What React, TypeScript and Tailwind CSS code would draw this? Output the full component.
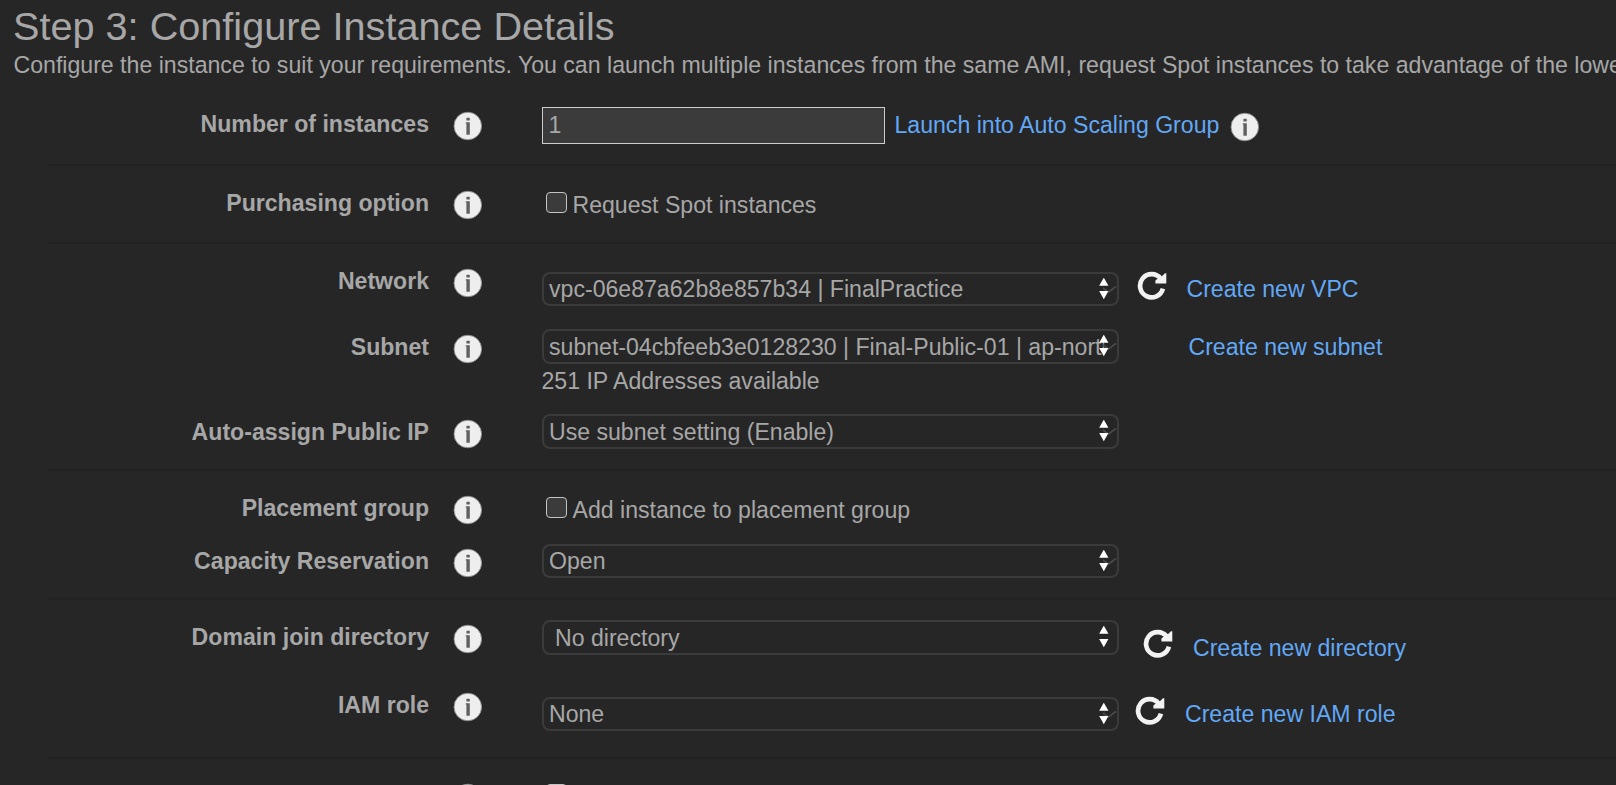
import React from 'react';

function Info({ className = '' }: { className?: string }) {
  return (
    <svg className={`size-[30px] shrink-0 ${className}`} viewBox="0 0 30 30">
      <circle cx="14.8" cy="15" r="13.8" fill="#eeeeee" stroke="#8a8a8a" strokeWidth="0.9" />
      <rect x="13.4" y="6.8" width="3.4" height="2.7" rx="0.6" fill="#606060" />
      <path d="M12.8 11.2H16.8V23.8H13.4V12.6H12.8Z" fill="#606060" />
    </svg>
  );
}

function Refresh({ className = '' }: { className?: string }) {
  return (
    <svg className={`size-[30px] shrink-0 ${className}`} viewBox="0 0 30 30">
      <path d="M23.8 7.6A11.6 11.6 0 1 0 25.9 17.6" fill="none" stroke="#f2f2f2" strokeWidth="4.7" />
      <path d="M29.3 2.2V12.6H18.4V9.6L21.4 7L24.6 5.4L28 2.2Z" fill="#f2f2f2" />
    </svg>
  );
}

function Select({ value, className = '', check = true, indent = false }: { value: string; className?: string; check?: boolean; indent?: boolean }) {
  return (
    <div className={`relative flex w-[577px] shrink-0 items-center overflow-hidden rounded-[8px] border-2 border-[#3b3b3b] ${className}`}>
      <span className={`w-[560px] overflow-hidden whitespace-nowrap leading-[26px] ${indent ? 'pl-[11px]' : 'pl-[5px]'}`}>{value}</span>
      <svg className="absolute right-0 top-[4px] h-[24px] w-[20px]" viewBox="0 0 20 24">
        {check && <path d="M6 10L11.5 14.2L19 8.3" fill="none" stroke="#4a4a4a" strokeWidth="1.7" />}
        <path d="M6.8 -0.4L11.4 7.8H2.2Z" fill="#fff" />
        <path d="M2.2 13H11.4L6.8 21.2Z" fill="#fff" />
      </svg>
    </div>
  );
}

function Link({ children, className = '' }: { children: React.ReactNode; className?: string }) {
  return <a className={`whitespace-nowrap leading-[26px] text-[#62a8f5] ${className}`}>{children}</a>;
}

function Row({ label, height, children }: { label: string; height: string; children: React.ReactNode }) {
  return (
    <div className={`flex shrink-0 items-start ${height}`}>
      <div className="w-[429px] shrink-0 whitespace-nowrap text-right font-bold leading-[26px]">{label}</div>
      <Info className="ml-[24px]" />
      <div className="ml-[59px] flex items-start">{children}</div>
    </div>
  );
}

function Divider({ className }: { className: string }) {
  return <hr className={`ml-[47px] h-[2px] shrink-0 border-0 bg-[#222222] ${className}`} />;
}

function Checkbox({ className = '' }: { className?: string }) {
  return <span className={`ml-[4px] size-[21px] shrink-0 rounded-[4px] border border-[#c4c4c4] bg-[#3b3b3b] ${className}`} />;
}

export default function App() {
  return (
    <main className="flex h-[785px] w-full flex-col overflow-hidden bg-[#262626] font-['Liberation_Sans',Arial,sans-serif] text-[23.1px] text-[#a7a7a7]">
      <h1 className="mt-[3px] h-[46px] shrink-0 whitespace-nowrap pl-[13px] text-[39.65px] leading-[46px]">Step 3: Configure Instance Details</h1>
      <p className="mt-[3px] h-[59px] shrink-0 whitespace-nowrap pl-[13.5px] text-[23.12px] leading-[26px]">
        Configure the instance to suit your requirements. You can launch multiple instances from the same AMI, request Spot instances to take advantage of the lower pricing, assign an access management role to the instance, and more.
      </p>
      <Row label="Number of instances" height="h-[53px]">
        <div className="-mt-[4px] h-[37px] w-[343px] border border-[#cccccc] bg-[#3b3b3b] pl-[5.5px] leading-[35px]">1</div>
        <Link className="ml-[9.5px] mt-px">Launch into Auto Scaling Group</Link>
        <Info className="ml-[11px] mt-[1px]" />
      </Row>
      <Divider className="mb-[24px]" />
      <Row label="Purchasing option" height="h-[52px]">
        <Checkbox className="mt-[2px]" />
        <span className="ml-[5.5px] mt-[2px] whitespace-nowrap leading-[26px]">Request Spot instances</span>
      </Row>
      <Divider className="mb-[24px]" />
      <Row label="Network" height="h-[66px]">
        <Select value="vpc-06e87a62b8e857b34 | FinalPractice" className="mt-[4px] h-[34px]" />
        <Refresh className="ml-[18px] mt-[3px]" />
        <Link className="ml-[19.5px] mt-[8px]">Create new VPC</Link>
      </Row>
      <Row label="Subnet" height="h-[85px]">
        <div>
          <Select value="subnet-04cbfeeb3e0128230 | Final-Public-01 | ap-northeast-2a" className="-mt-[5px] h-[35px]" />
          <div className="-ml-[0.5px] mt-[4px] leading-[26px]">251 IP Addresses available</div>
        </div>
        <Link className="ml-[69.5px]">Create new subnet</Link>
      </Row>
      <Row label="Auto-assign Public IP" height="h-[50px]">
        <Select value="Use subnet setting (Enable)" className="-mt-[5px] h-[35px]" />
      </Row>
      <Divider className="mb-[24px]" />
      <Row label="Placement group" height="h-[53px]">
        <Checkbox className="mt-[2px]" />
        <span className="ml-[5.5px] mt-[2px] whitespace-nowrap leading-[26px]">Add instance to placement group</span>
      </Row>
      <Row label="Capacity Reservation" height="h-[50px]">
        <Select value="Open" className="-mt-[4px] h-[34px]" />
      </Row>
      <Divider className="mb-[24px]" />
      <Row label="Domain join directory" height="h-[68px]">
        <Select value="No directory" className="-mt-[4px] h-[35px]" check={false} indent />
        <Refresh className="ml-[24px] mt-[5px]" />
        <Link className="ml-[20px] mt-[11px]">Create new directory</Link>
      </Row>
      <Row label="IAM role" height="h-[65px]">
        <Select value="None" className="mt-[5px] h-[34px]" />
        <Refresh className="ml-[16px] mt-[4px]" />
        <Link className="ml-[20px] mt-[9px]">Create new IAM role</Link>
      </Row>
      <Divider className="mb-[24px]" />
      <Row label="" height="h-[50px]">
        <Checkbox className="mt-[1px]" />
      </Row>
    </main>
  );
}
